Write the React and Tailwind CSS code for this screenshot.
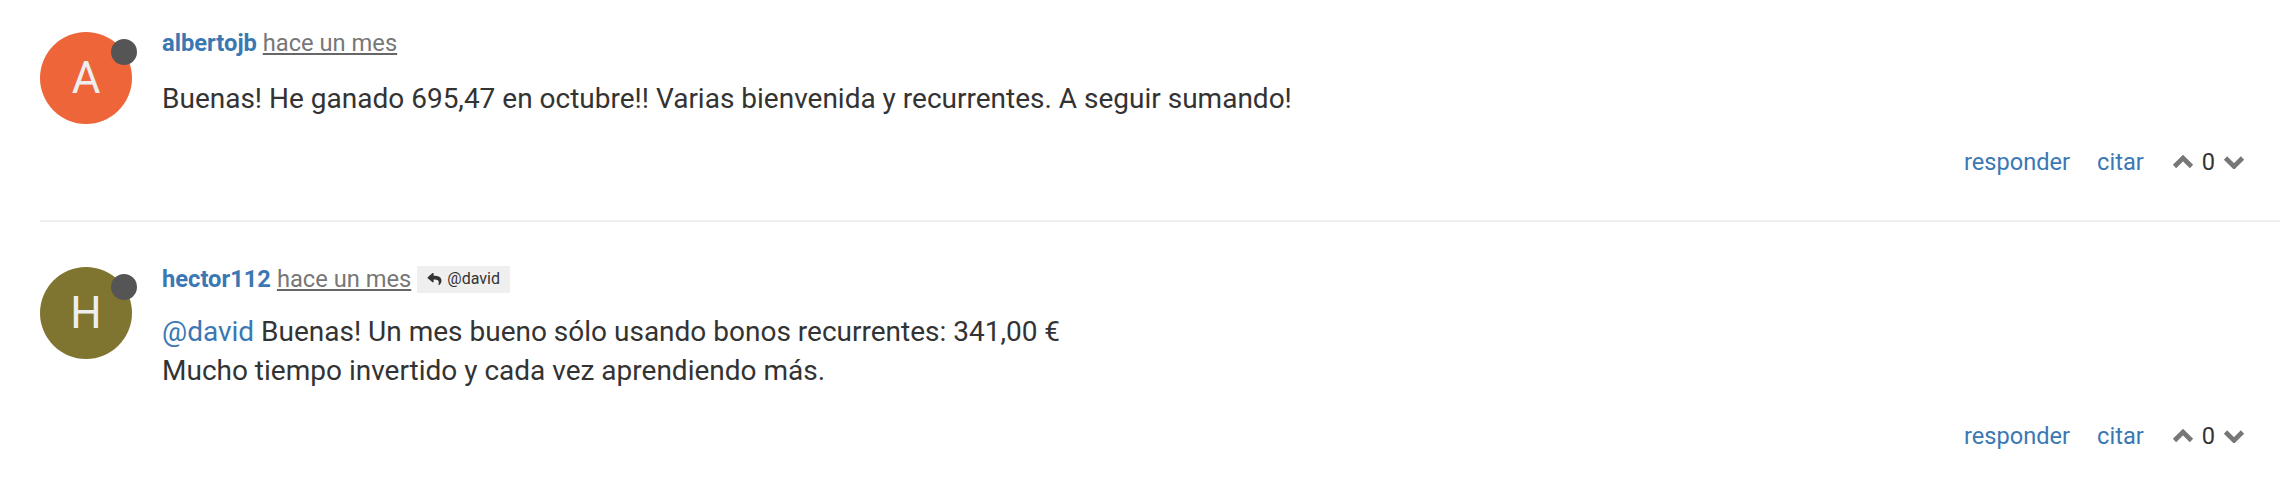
import React from "react";
import { FaReply } from "react-icons/fa";

function Chevron({ down }) {
  return (
    <svg width="22" height="14" viewBox="0 0 22 14" className="block">
      <polyline
        points={down ? "2.5,3 11,11.5 19.5,3" : "2.5,11.5 11,3 19.5,11.5"}
        fill="none"
        stroke="#777"
        strokeWidth="4.6"
        strokeLinejoin="miter"
      />
    </svg>
  );
}

function Avatar({ letter, color }) {
  return (
    <div className="relative w-[92px] h-[92px] shrink-0">
      <div
        className={`w-[92px] h-[92px] rounded-full flex items-center justify-center text-[44px] leading-none text-[#eeeeee] ${color}`}
      >
        {letter}
      </div>
      <div className="absolute left-[71px] top-[7px] w-[26px] h-[26px] rounded-full bg-[#555555]" />
    </div>
  );
}

function Actions() {
  return (
    <div className="flex justify-end items-center h-[32px] text-[23.6px] leading-[32px]">
      <a className="text-[#3a78b4]">responder</a>
      <a className="text-[#3a78b4] ml-[27px]">citar</a>
      <span className="ml-[28px]">
        <Chevron />
      </span>
      <span className="ml-[8px] text-[#333]">0</span>
      <span className="ml-[8px]">
        <Chevron down />
      </span>
    </div>
  );
}

export default function App() {
  return (
    <div
      className="w-[2280px] h-[480px] bg-white pl-[40px] overflow-hidden"
      style={{ fontFamily: "Roboto, 'Noto Sans', sans-serif" }}
    >
      {/* Comment 1 */}
      <div className="border-b-2 border-[#eeeeee] pb-[42px] pt-[27px]">
        <div className="flex gap-[30px]">
          <div className="mt-[5px]">
            <Avatar letter="A" color="bg-[#ed6539]" />
          </div>
          <div className="flex-1 pr-[35px]">
            <div className="h-[32px] text-[23.7px] leading-[32px] whitespace-nowrap">
              <span className="font-bold text-[#3a78b4]">albertojb</span>{" "}
              <span className="text-[#777] underline decoration-[#666]">hace un mes</span>
            </div>
            <div className="mt-[21px] text-[28px] leading-[38.4px] text-[#333]">
              Buenas! He ganado 695,47 en octubre!! Varias bienvenida y recurrentes. A seguir sumando!
            </div>
            <div className="mt-[28px]">
              <Actions />
            </div>
          </div>
        </div>
      </div>

      {/* Comment 2 */}
      <div className="pt-[41px]">
        <div className="flex gap-[30px]">
          <div className="mt-[4px]">
            <Avatar letter="H" color="bg-[#807530]" />
          </div>
          <div className="flex-1 pr-[35px]">
            <div className="h-[32px] text-[23.7px] leading-[32px] whitespace-nowrap flex items-center">
              <span className="font-bold text-[#3a78b4]">hector112</span>
              <span className="w-[6px]" />
              <span className="text-[#777] underline decoration-[#666]">hace un mes</span>
              <span className="ml-[6px] h-[27px] px-[10px] bg-[#efefef] flex items-center gap-[5px] text-[16px] leading-none text-[#333]">
                <FaReply className="w-[15px] h-[14px]" />
                <span>@david</span>
              </span>
            </div>
            <div className="mt-[18px] text-[28px] leading-[38.4px] text-[#333]">
              <div>
                <span className="text-[#3a78b4]">@david</span> Buenas! Un mes bueno sólo usando bonos recurrentes: 341,00 €
              </div>
              <div>Mucho tiempo invertido y cada vez aprendiendo más.</div>
            </div>
            <div className="mt-[30px]">
              <Actions />
            </div>
          </div>
        </div>
      </div>
    </div>
  );
}
